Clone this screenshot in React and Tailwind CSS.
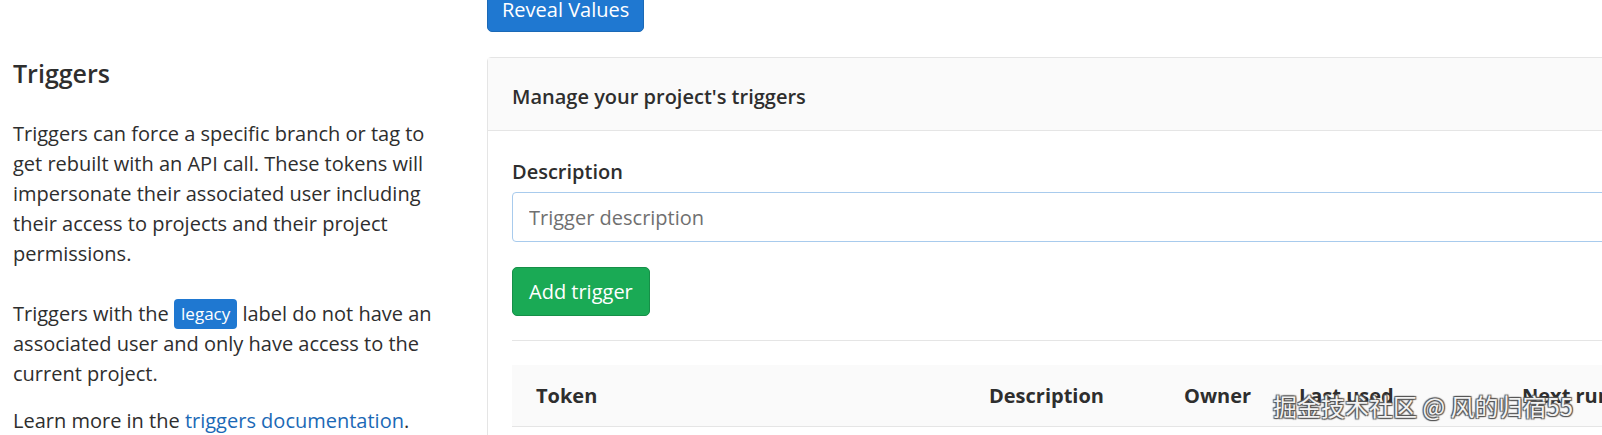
import React from 'react';

const TriggersSettings = () => {
    const columns = [
        { label: 'Token', width: 'w-[453px]' },
        { label: 'Description', width: 'w-[195px]' },
        { label: 'Owner', width: 'w-[115px]' },
        { label: 'Last used', width: 'w-[223px]' },
        { label: 'Next run', width: 'w-[200px]' },
    ];

    return (
        <div className="relative w-[1602px] h-[435px] overflow-hidden bg-white text-[#2e2e2e] font-['Open_Sans','Noto_Sans',sans-serif] text-[20px] leading-[30px]">
            <div className="flex">
                {/* Left: description */}
                <div className="w-[487px] shrink-0 pl-[13px] pr-[40px] pt-[57px]">
                    <h4 className="text-[25px] leading-[32px] font-semibold">Triggers</h4>
                    <p className="mt-[30px]">
                        Triggers can force a specific branch or tag to get rebuilt with an API call. These tokens will impersonate their associated user including their access to projects and their project permissions.
                    </p>
                    <p className="mt-[30px]">
                        Triggers with the{' '}
                        <span className="inline-block bg-[#1f78d1] text-white text-[17px] leading-[30px] px-[7px] rounded-[4px] align-middle -mt-[4px]">legacy</span>{' '}
                        label do not have an associated user and only have access to the current project.
                    </p>
                    <p className="mt-[17px]">
                        Learn more in the <a className="text-[#1b69b6]">triggers documentation</a>.
                    </p>
                </div>

                {/* Right: card */}
                <div className="flex-1 min-w-0">
                    <button className="block -mt-[13px] h-[45px] px-[14px] bg-[#1f78d1] border border-[#1b69b6] rounded-[5px] text-white text-[20px]">
                        Reveal Values
                    </button>
                    <div className="mt-[25px] w-[1300px] border border-[#e5e5e5] rounded-[4px]">
                        <div className="bg-[#fafafa] border-b border-[#e5e5e5] px-[24px] pt-[24px] pb-[18px] font-semibold">
                            Manage your project's triggers
                        </div>
                        <div className="px-[24px] pt-[26px]">
                            <label className="block font-semibold">Description</label>
                            <input
                                className="mt-[5px] block w-full h-[50px] px-[16px] border border-[#a8cbed] rounded-[4px] text-[20px] placeholder:text-[#707070] outline-none"
                                placeholder="Trigger description"
                            />
                            <button className="block mt-[25px] h-[49px] px-[16px] bg-[#1aaa55] border border-[#168f48] rounded-[5px] text-white text-[20px]">
                                Add trigger
                            </button>
                            <div className="mt-[24px] border-t border-[#e5e5e5]"></div>
                            <div className="mt-[24px] flex h-[62px] items-center bg-[#fafafa] border-b border-[#e5e5e5] pl-[24px] font-bold">
                                {columns.map((col) => (
                                    <div key={col.label} className={`${col.width} shrink-0 whitespace-nowrap`}>{col.label}</div>
                                ))}
                            </div>
                            <div className="h-[40px]"></div>
                        </div>
                    </div>
                </div>
            </div>

            {/* Watermark */}
            <div className="absolute left-[1273px] top-[390px] text-[24px] leading-[32px] whitespace-nowrap text-[#f2f2f2] font-['Noto_Sans_CJK_SC',sans-serif] [text-shadow:1px_1px_1px_#555,-1px_-1px_1px_#555,1px_-1px_1px_#555,-1px_1px_1px_#555]">
                掘金技术社区 @ 风的归宿55
            </div>
        </div>
    );
};

export default TriggersSettings;
